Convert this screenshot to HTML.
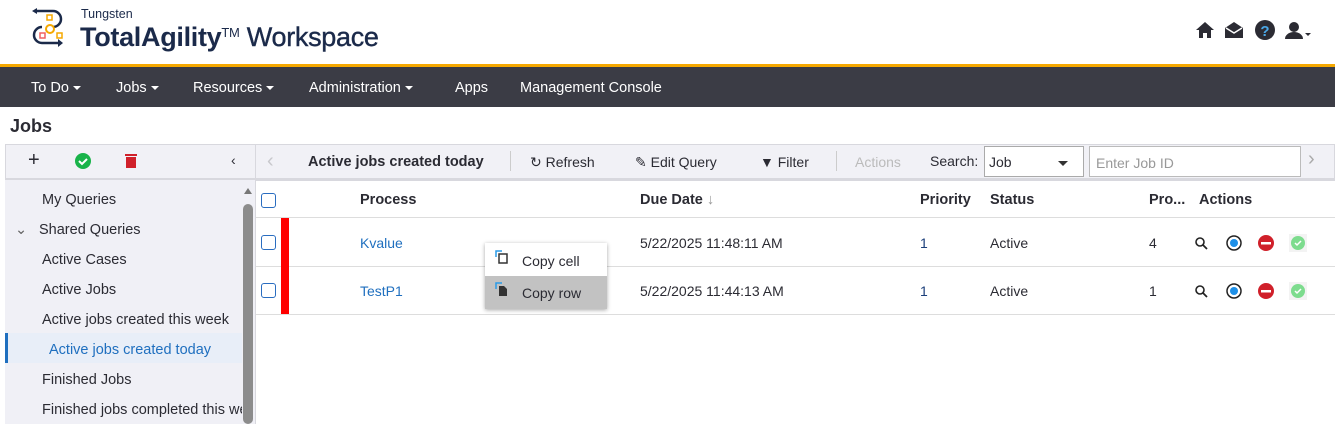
<!DOCTYPE html>
<html><head><meta charset="utf-8"><style>
*{box-sizing:border-box;margin:0;padding:0}
body{width:1335px;height:424px;overflow:hidden;font-family:"Liberation Sans",sans-serif;font-size:14px;color:#2b2b33;background:#fff;position:relative}
.a{position:absolute;white-space:nowrap}
.nav{position:absolute;top:64px;left:0;width:1335px;height:43px;background:#3b3c45;border-top:3px solid #f5a800}
.nav span{position:absolute;top:13px;color:#fff;font-size:14.5px}
.car{display:inline-block;border-left:4px solid transparent;border-right:4px solid transparent;border-top:4px solid #fff;vertical-align:middle;margin-left:4px}
.lp{position:absolute;left:5px;top:180px;width:250px;height:244px;background:#f0f0f6}
.lp .a{font-size:14.5px;color:#2b2b33}
.cb{position:absolute;width:15px;height:15px;border:1.5px solid #2a6dc0;border-radius:3px;background:#fff}
.hd{font-weight:bold;font-size:14.5px}
.lnk{color:#1f6fbf}
.hl{position:absolute;left:256px;width:1079px;height:1px;background:#ddd}
</style></head><body>
<svg class="a" style="left:30px;top:8px" width="40" height="40" viewBox="0 0 40 40">
<path d="M5 3h18a8 8 0 0 1 0 16" fill="none" stroke="#1b2a4a" stroke-width="2.5"/>
<path d="M2 3l5-3v6z" fill="#1b2a4a"/>
<path d="M12 19a8 8 0 0 0 0 16h16" fill="none" stroke="#1b2a4a" stroke-width="2.5"/>
<path d="M28 31l5 4-5 4z" fill="#1b2a4a"/>
<rect x="17" y="7" width="5" height="5" fill="none" stroke="#f5a800" stroke-width="1.5"/>
<circle cx="20" cy="21" r="4" fill="none" stroke="#f5a800" stroke-width="2"/>
<rect x="10" y="25" width="5" height="5" fill="none" stroke="#f06060" stroke-width="1.5"/>
<rect x="27" y="25" width="5" height="5" fill="none" stroke="#f5a800" stroke-width="1.5"/>
</svg>
<div class="a" style="left:81px;top:7px;font-size:12.5px;color:#1b2a4a">Tungsten</div>
<div class="a" style="left:80px;top:22px;font-size:27px;color:#1b2a4a;letter-spacing:-0.3px"><b>TotalAgility</b><span style="font-size:13px;vertical-align:top;position:relative;top:3px">TM</span> <span style="font-weight:500;-webkit-text-stroke:0.4px #1b2a4a">Workspace</span></div>
<svg class="a" style="left:1195px;top:20px" width="125" height="22" viewBox="0 0 125 22">
<path d="M1 10L10 2l9 8h-3v8h-4v-5H8v5H4v-8z" fill="#2b2b33"/>
<path d="M30 8l9-6 9 6v10H30z" fill="#2b2b33"/><path d="M31 8l8 5 8-5" fill="none" stroke="#fff" stroke-width="1.5"/>
<circle cx="70" cy="10" r="10" fill="#2b2b33"/><text x="70" y="16" font-size="15" font-weight="bold" fill="#4aa8e8" text-anchor="middle" font-family="Liberation Sans">?</text>
<circle cx="99" cy="7" r="5" fill="#2b2b33"/><path d="M90 19a9 7 0 0 1 18 0z" fill="#2b2b33"/>
<path d="M110 13h6l-3 3z" fill="#2b2b33"/>
</svg>
<div class="nav">
<span style="left:31px">To Do<i class="car"></i></span>
<span style="left:116px">Jobs<i class="car"></i></span>
<span style="left:193px">Resources<i class="car"></i></span>
<span style="left:309px">Administration<i class="car"></i></span>
<span style="left:455px">Apps</span>
<span style="left:520px">Management Console</span>
</div>
<div class="a" style="left:10px;top:116px;font-size:18px;font-weight:bold">Jobs</div>
<div class="a" style="left:5px;top:144px;width:1330px;height:37px;background:#f1f1f6;border:1px solid #d8d8de;border-bottom:3px solid #d8d8de"></div>
<div class="a" style="left:255px;top:145px;width:1px;height:279px;background:#d8d8de"></div>
<div class="a" style="left:28px;top:149px;font-size:20px">+</div>
<svg class="a" style="left:75px;top:153px" width="16" height="16"><circle cx="8" cy="8" r="8" fill="#19b34a"/><path d="M4 8l3 3 5-5" stroke="#fff" stroke-width="2" fill="none"/></svg>
<svg class="a" style="left:125px;top:153px" width="12" height="15"><rect x="0" y="1" width="12" height="2" fill="#d0202a"/><rect x="1" y="4" width="10" height="11" fill="#d0202a"/></svg>
<div class="a" style="left:231px;top:152px;font-size:14px">‹</div>
<div class="a" style="left:267px;top:150px;font-size:20px;color:#c8c8cc">‹</div>
<div class="a hd" style="left:308px;top:154px">Active jobs created today</div>
<div class="a" style="left:510px;top:151px;width:1px;height:20px;background:#ccc"></div>
<div class="a" style="left:530px;top:154px">↻ Refresh</div>
<div class="a" style="left:635px;top:154px">✎ Edit Query</div>
<div class="a" style="left:760px;top:154px">▼ Filter</div>
<div class="a" style="left:836px;top:151px;width:1px;height:20px;background:#ccc"></div>
<div class="a" style="left:855px;top:154px;color:#bbb">Actions</div>
<div class="a" style="left:930px;top:153px">Search:</div>
<div class="a" style="left:984px;top:146px;width:100px;height:31px;border:1px solid #aaa;background:#fff;padding:7px 4px">Job<i class="car" style="border-top-color:#333;margin-left:46px;border-width:5px 5px 0"></i></div>
<div class="a" style="left:1089px;top:146px;width:212px;height:31px;border:1px solid #bbb;background:#fff;padding:8px 6px;color:#999">Enter Job ID</div>
<div class="a" style="left:1308px;top:148px;font-size:20px;color:#aaa">›</div>
<div class="lp">
<div class="a" style="left:37px;top:12px">My Queries</div>
<div class="a" style="left:10px;top:42px;color:#666">⌄</div>
<div class="a" style="left:34px;top:42px">Shared Queries</div>
<div class="a" style="left:37px;top:72px">Active Cases</div>
<div class="a" style="left:37px;top:102px">Active Jobs</div>
<div class="a" style="left:37px;top:132px">Active jobs created this week</div>
<div class="a" style="left:0;top:153px;width:237px;height:30px;background:#e8eef8;border-left:3px solid #1f6fbf"></div>
<div class="a" style="left:44px;top:162px;color:#1f6fbf">Active jobs created today</div>
<div class="a" style="left:37px;top:192px">Finished Jobs</div>
<div class="a" style="left:37px;top:222px;width:200px;overflow:hidden">Finished jobs completed this week</div>
<div class="a" style="left:237px;top:0;width:13px;height:244px;background:#f0f0f6"></div>
<div class="a" style="left:239px;top:8px;border-left:4px solid transparent;border-right:4px solid transparent;border-bottom:6px solid #777"></div>
<div class="a" style="left:238px;top:24px;width:10px;height:220px;background:#8c8c8c;border-radius:5px"></div>
</div>
<div class="cb" style="left:261px;top:193px"></div>
<div class="a hd" style="left:360px;top:192px">Process</div>
<div class="a hd" style="left:640px;top:192px">Due Date <span style="color:#999;font-weight:normal">↓</span></div>
<div class="a hd" style="left:920px;top:192px">Priority</div>
<div class="a hd" style="left:990px;top:192px">Status</div>
<div class="a hd" style="left:1149px;top:192px">Pro...</div>
<div class="a hd" style="left:1199px;top:192px">Actions</div>
<div class="hl" style="top:217px"></div>
<div class="hl" style="top:266px"></div>
<div class="hl" style="top:314px"></div>
<div class="a" style="left:281px;top:218px;width:8px;height:96px;background:#f00"></div>
<div class="cb" style="left:261px;top:235px"></div>
<div class="cb" style="left:261px;top:283px"></div>
<div class="a lnk" style="left:360px;top:235px">Kvalue</div>
<div class="a" style="left:640px;top:235px">5/22/2025 11:48:11 AM</div>
<div class="a lnk" style="left:920px;top:235px;color:#1b3f7a">1</div>
<div class="a" style="left:990px;top:235px">Active</div>
<div class="a" style="left:1149px;top:235px">4</div>
<div class="a lnk" style="left:360px;top:283px">TestP1</div>
<div class="a" style="left:640px;top:283px">5/22/2025 11:44:13 AM</div>
<div class="a lnk" style="left:920px;top:283px;color:#1b3f7a">1</div>
<div class="a" style="left:990px;top:283px">Active</div>
<div class="a" style="left:1149px;top:283px">1</div>
<svg class="a" style="left:1193px;top:234px" width="115" height="68">
<g id="r"><circle cx="7" cy="8" r="4" fill="none" stroke="#222" stroke-width="1.6"/><path d="M10 11l4 4" stroke="#222" stroke-width="1.8"/>
<circle cx="41" cy="9" r="7" fill="none" stroke="#222" stroke-width="1.5"/><circle cx="41" cy="9" r="4" fill="#1e90e8"/>
<circle cx="73" cy="9" r="8" fill="#d0202a"/><rect x="68" y="8" width="10" height="2.5" fill="#fff"/>
<rect x="96" y="0" width="18" height="18" fill="#f3f3f3"/><circle cx="105" cy="9" r="7" fill="#7ddc8e"/><path d="M102 9l2 2 4-4" stroke="#fff" stroke-width="1.5" fill="none"/></g>
<use href="#r" y="48"/>
</svg>
<div class="a" style="left:485px;top:243px;width:122px;height:66px;background:#fff;box-shadow:0 1px 4px rgba(0,0,0,.35)">
<div class="a" style="left:0;top:33px;width:122px;height:33px;background:#c2c2c2"></div>
<svg class="a" style="left:10px;top:7px" width="14" height="50"><path d="M1 7V1h6" stroke="#2a9be8" fill="none" stroke-width="1.5"/><rect x="4" y="4" width="8" height="9" fill="none" stroke="#333" stroke-width="1.5"/><path d="M1 39v-6h6" stroke="#2a9be8" fill="none" stroke-width="1.5"/><path d="M4 36h5l3 3v7H4z" fill="#333"/></svg>
<div class="a" style="left:37px;top:10px">Copy cell</div>
<div class="a" style="left:37px;top:42px">Copy row</div>
</div>
</body></html>
